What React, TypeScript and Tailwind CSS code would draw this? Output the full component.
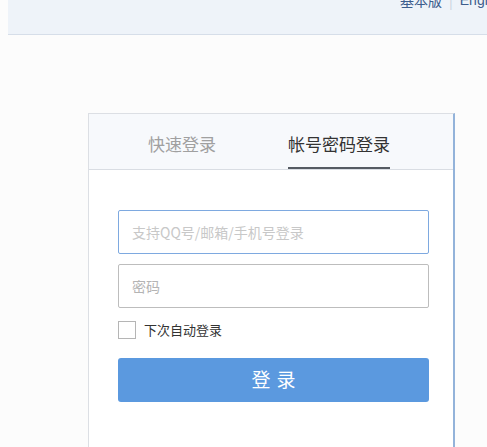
export default function App() {
  return (
    <div
      className="w-[487px] h-[447px] overflow-hidden bg-[#fcfcfc]"
      style={{ fontFamily: '"Noto Sans CJK SC", "Liberation Sans", sans-serif' }}
    >
      {/* Top bar */}
      <div className="ml-[8px] h-[35px] flex items-start bg-[#eef3f9] border-b border-[#d6dee9]">
        <div className="pl-[392px] -mt-[10px] flex items-center gap-[7px] text-[14px] leading-[20px] text-[#3d5d8c] whitespace-nowrap">
          <span>基本版</span>
          <span className="text-[#c9d2dd]">|</span>
          <span style={{ fontFamily: '"Liberation Sans", sans-serif' }}>English</span>
        </div>
      </div>

      {/* Login card */}
      <div className="mt-[78px] ml-[88px] w-[367px] h-[400px] bg-white border-l border-t border-[#dcdfe4] border-r-2 border-r-[#93b3da]">
        <div className="h-[56px] flex pl-[59px] gap-[72px] bg-[#f7f9fc] border-b border-[#d9dde3]">
          <div className="h-full flex items-center pt-[5px] text-[17px] text-[#a0a0a0]">快速登录</div>
          <div className="h-full flex items-center pt-[7px] border-b-2 border-[#555b63] text-[17px] text-[#333]">
            帐号密码登录
          </div>
        </div>

        <div className="pt-[40px] pl-[29px]">
          <div className="w-[311px] h-[44px] rounded-[2px] border border-[#7ea9e0] flex items-center pl-[13px] text-[14px] text-[#c8c8c8]">
            支持QQ号/邮箱/手机号登录
          </div>
          <div className="mt-[10px] w-[311px] h-[44px] rounded-[2px] border border-[#bdbdbd] flex items-center pl-[13px] text-[14px] text-[#b4b4b4]">
            密码
          </div>
          <div className="mt-[12px] flex items-center gap-[8px]">
            <div className="w-[18px] h-[18px] border border-[#b5b5b5] bg-white" />
            <span className="text-[13px] text-[#333]">下次自动登录</span>
          </div>
          <div className="mt-[18px] w-[311px] h-[44px] rounded-[3px] bg-[#5b99df] flex items-center justify-center text-[19px] text-white tracking-[6px] pl-[6px]">
            登录
          </div>
        </div>
      </div>
    </div>
  );
}
